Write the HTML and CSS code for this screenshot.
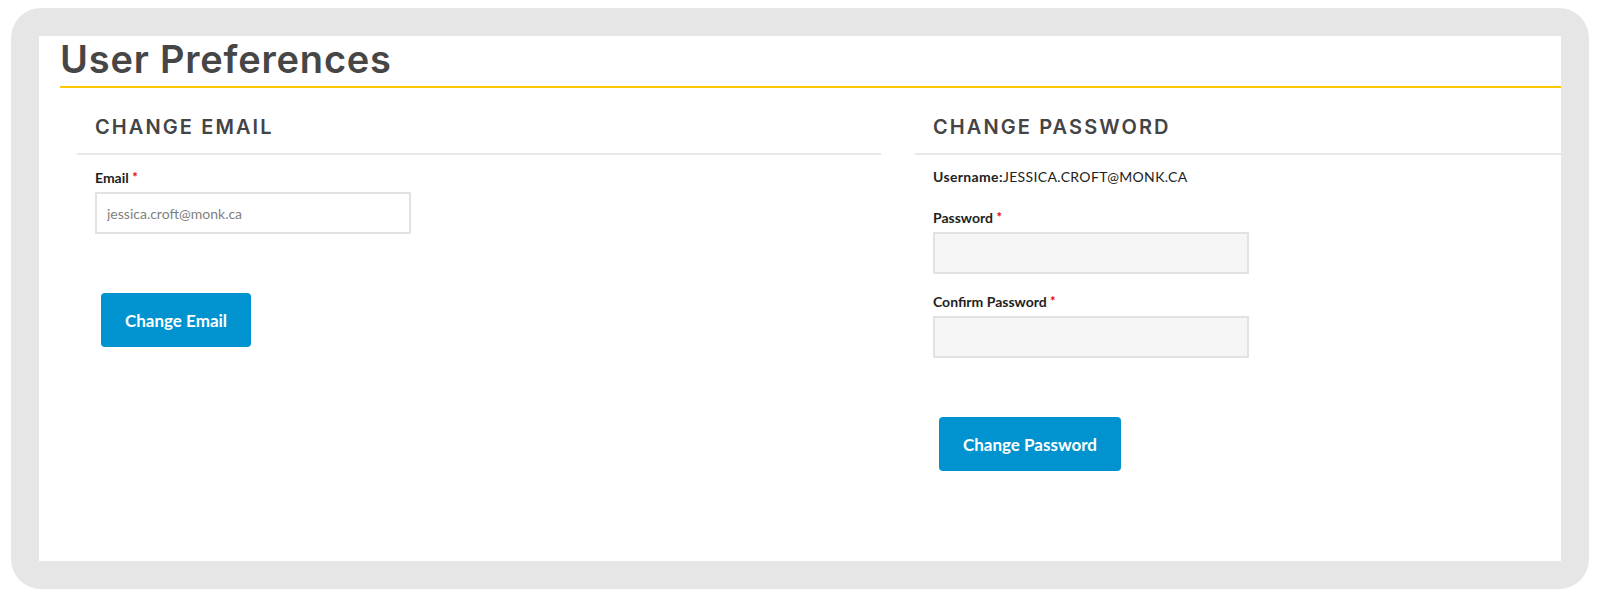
FILE: index.html
```html
<!DOCTYPE html>
<html lang="en">
<head>
  <meta charset="UTF-8">
  <title>User Preferences</title>
  <link rel="stylesheet" href="styles.css">
</head>
<body>
  <div class="frame">
    <div class="page">
      <h1 class="page-title">User Preferences</h1>

      <div class="columns">
        <!-- email -->
        <section class="panel">
          <h2 class="panel-title">CHANGE EMAIL</h2>
          <div class="panel-body">
            <div class="field">
              <label class="field-label">Email <span class="req">*</span></label>
              <input class="field-input" type="text" value="jessica.croft@monk.ca">
            </div>
            <button class="btn">Change Email</button>
          </div>
        </section>

        <!-- password -->
        <section class="panel">
          <h2 class="panel-title">CHANGE PASSWORD</h2>
          <div class="panel-body">
            <div class="username"><b>Username:</b>JESSICA.CROFT@MONK.CA</div>
            <div class="field">
              <label class="field-label">Password <span class="req">*</span></label>
              <input class="field-input filled" type="password">
            </div>
            <div class="field">
              <label class="field-label">Confirm Password <span class="req">*</span></label>
              <input class="field-input filled" type="password">
            </div>
            <button class="btn">Change Password</button>
          </div>
        </section>
      </div>
    </div>
  </div>
</body>
</html>
```

FILE: styles.css
```css
body {
  margin: 0;
  background: #fff;
  font-family: 'Lato', sans-serif;
}
.frame {
  margin: 8px 0 0 11px;
  width: 1522px;
  height: 525px;
  padding: 28px;
  background: #e6e6e6;
  border-radius: 30px;
}
.page {
  height: 100%;
  background: #fff;
  overflow: hidden;
  padding-left: 21px;
}
.page-title {
  margin: 0;
  padding-bottom: 4px;
  font-family: 'Inter', sans-serif;
  font-size: 38px;
  line-height: 46px;
  font-weight: 600;
  color: #464646;
  letter-spacing: 0.8px;
  border-bottom: 2px solid #fcc800;
}
.columns {
  display: grid;
  grid-template-columns: 804px 804px;
  gap: 34px;
  margin-left: 17px;
}
.panel-title {
  margin: 0;
  padding: 27px 18px 14px;
  font-family: 'Inter', sans-serif;
  font-size: 20px;
  line-height: 24px;
  font-weight: 600;
  color: #444;
  letter-spacing: 2.1px;
  border-bottom: 2px solid #e8e8e8;
}
.panel-body {
  padding: 12px 18px 0;
}
.username {
  font-size: 14px;
  line-height: 20px;
  color: #222;
  letter-spacing: 0.35px;
  margin-bottom: 20px;
}
.username b { font-weight: 700; }
.field { margin-bottom: 17px; }
.field-label {
  display: block;
  font-size: 14px;
  line-height: 20px;
  font-weight: 700;
  color: #1e1e1e;
  margin-bottom: 4px;
}
.req { color: #e0001b; font-size: 13px; vertical-align: 1px; }
.field-input {
  display: block;
  box-sizing: border-box;
  width: 316px;
  height: 42px;
  padding: 0 10px;
  border: 2px solid #e2e2e2;
  background: #fff;
  font-family: 'Lato', sans-serif;
  font-size: 14px;
  color: #808080;
  outline: none;
}
.field-input.filled { background: #f6f6f6; }
.btn {
  display: block;
  margin: 59px 0 0 6px;
  height: 54px;
  padding: 0 24px;
  border: none;
  border-radius: 4px;
  background: #0093cf;
  color: #fff;
  font-family: 'Lato', sans-serif;
  font-size: 17px;
  font-weight: 700;
  cursor: pointer;
}
```
